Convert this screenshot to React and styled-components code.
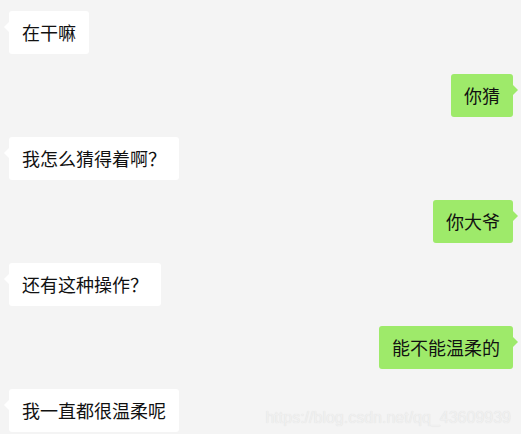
import React from 'react';
import styled, { createGlobalStyle, css } from 'styled-components';

const GlobalStyle = createGlobalStyle`
  html, body {
    margin: 0;
    padding: 0;
    background: #f4f4f4;
  }
  body {
    font-family: "Noto Sans CJK SC", "Microsoft YaHei", sans-serif;
  }
`;

const ChatWindow = styled.div`
  position: relative;
  width: 521px;
  height: 434px;
  box-sizing: border-box;
  padding: 11px 8px 0 9px;
  display: flex;
  flex-direction: column;
  gap: 20px;
  overflow: hidden;
`;

const Row = styled.div`
  display: flex;
  justify-content: ${({ mine }) => (mine ? 'flex-end' : 'flex-start')};
`;

const Bubble = styled.div`
  position: relative;
  padding: 9px 13px;
  font-size: 18px;
  line-height: 25px;
  color: #111;
  border-radius: 3px;
  background: ${({ mine }) => (mine ? '#9eea6a' : '#ffffff')};
  white-space: nowrap;

  &::before {
    content: '';
    position: absolute;
    top: 11px;
    border-top: 5px solid transparent;
    border-bottom: 5px solid transparent;
    ${({ mine }) =>
      mine
        ? css`
            right: -5px;
            border-left: 5px solid #9eea6a;
          `
        : css`
            left: -5px;
            border-right: 5px solid #ffffff;
          `}
  }
`;

const Watermark = styled.div`
  position: absolute;
  right: 10px;
  bottom: 7px;
  font-family: "Liberation Sans", Arial, sans-serif;
  font-size: 16px;
  color: #f0f0f0;
  text-shadow: 0 0 1px #dcdcdc;
`;

const messages = [
  { text: '在干嘛', mine: false },
  { text: '你猜', mine: true },
  { text: '我怎么猜得着啊？', mine: false },
  { text: '你大爷', mine: true },
  { text: '还有这种操作？', mine: false },
  { text: '能不能温柔的', mine: true },
  { text: '我一直都很温柔呢', mine: false },
];

const App = () => (
  <>
    <GlobalStyle />
    <ChatWindow>
      {messages.map((m, i) => (
        <Row key={i} mine={m.mine}>
          <Bubble mine={m.mine}>{m.text}</Bubble>
        </Row>
      ))}
      <Watermark>https://blog.csdn.net/qq_43609939</Watermark>
    </ChatWindow>
  </>
);

export default App;
